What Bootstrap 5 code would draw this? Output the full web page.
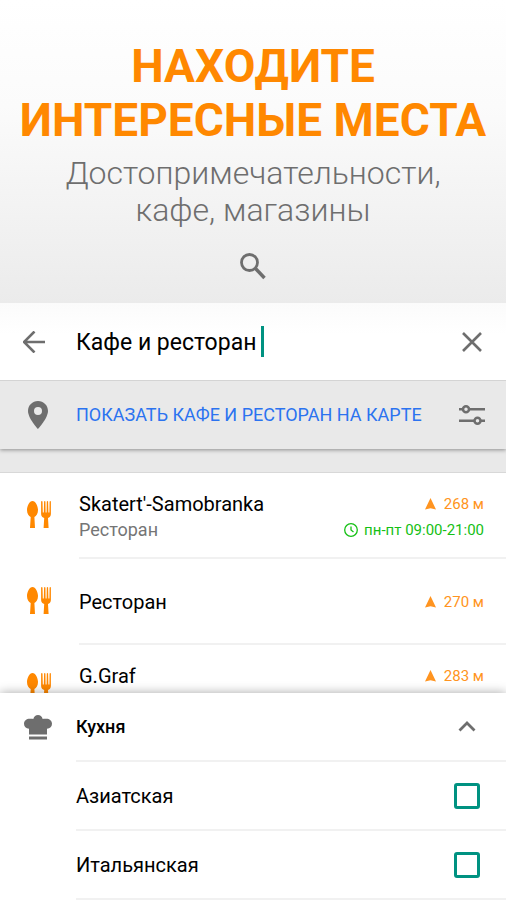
<!DOCTYPE html>
<html lang="ru">
<head>
<meta charset="utf-8">
<meta name="viewport" content="width=device-width, initial-scale=1">
<title>Находите интересные места</title>
<link href="https://cdn.jsdelivr.net/npm/bootstrap@5.3.0/dist/css/bootstrap.min.css" rel="stylesheet">
<style>
  :root { --accent: #ff8800; --ink: #6e6e6e; --teal: #009281; --line: #f1f1f1; --bar: #e9e9e9; }
  body { font-family: Roboto, "Liberation Sans", sans-serif; color: #000; background: #fff; overflow-x: hidden; }
  svg { display: block; flex: none; }
  .hero { background: linear-gradient(#fff 0, #fbfbfb 35%, #ebebeb 100%); padding: 39px 0 23px; color: var(--ink); }
  .hero-title { font-size: 46px; line-height: 54px; font-weight: 700; color: var(--accent); }
  .hero-sub { font-size: 32px; line-height: 37px; font-weight: 300; }
  .lead-cell { width: 76px; color: var(--ink); }
  .icon-btn { border: 0; background: none; padding: 0; color: var(--ink); }
  .icon-btn.back { margin-left: 23px; }
  .icon-btn.filters { margin-right: 21px; }
  .search-row { height: 78px; border-bottom: 1px solid #d4d4d4; background: linear-gradient(#fbfbfb, #fff 40%); }
  .search-input { width: 185px; border: 0; padding: 2px 0 0; background: none; font-size: 23px; line-height: 32px; color: #000; outline: 0; }
  .caret-bar { width: 3px; height: 31px; background: var(--teal); }
  .map-row { height: 68px; background: var(--bar); box-shadow: 0 1px 4px rgba(0,0,0,.4); clip-path: inset(0 0 -8px 0); position: relative; }
  .map-link { font-size: 18px; line-height: 24px; color: #2b73f0; text-decoration: none; }
  .spacer { height: 24px; background: var(--bar); border-bottom: 1px solid #d8d8d8; }
  .place { height: 86px; }
  .place-icon { width: 79px; padding: 28px 0 0 27px; color: var(--accent); }
  .place-body { border-bottom: 2px solid var(--line); padding: 18px 22px 0 0; }
  .single { padding-top: 30px; }
  .place-name { font-size: 20px; line-height: 26px; }
  .place-kind { font-size: 18px; line-height: 26px; color: #757575; }
  .meta { font-size: 15px; line-height: 26px; }
  .dist { color: #ff9420; }
  .hours { color: #15c015; }
  .sheet { margin-top: -38px; position: relative; background: #fff; box-shadow: 0 0 10px rgba(0,0,0,.35); }
  .sheet-body { height: 69px; border-bottom: 2px solid var(--line); padding-right: 26px; }
  .sheet-title { font-size: 18px; line-height: 24px; font-weight: 500; }
  .sheet-label { font-size: 20px; line-height: 26px; }
  .tick.form-check-input { width: 26px; height: 26px; margin: 0; border: 3px solid var(--teal); border-radius: 3px; background-color: #fff; }
</style>
</head>
<body>
<svg class="d-none" aria-hidden="true">
  <symbol id="cutlery" viewBox="0 0 24 27">
    <path fill="currentColor" d="M5.500 0C8.500 0 11 5 11 9c0 3.500-1.700 6-3.600 7L8 27H3l.7-11C1.700 15 0 12.500 0 9c0-4 2.500-9 5.500-9z"/>
    <path fill="currentColor" d="M14.100.5q.8-.8 1.400 0l.3 11h1l.3-11q.7-.8 1.300 0l.2 11h1l.2-11q.6-.8 1.300 0l.3 11h1l.2-11q.8-.8 1.300 0V13c0 2.400-1.500 3.300-2.900 4l.6 10h-5l.6-10c-1.600-.7-3.100-1.600-3.100-4z"/>
  </symbol>
  <symbol id="arrow" viewBox="0 0 11 12"><path fill="currentColor" d="M5.500 0L11 11.500l-5.500-1.300L0 11.500z"/></symbol>
</svg>

<header class="hero text-center">
  <h1 class="hero-title mb-0">НАХОДИТЕ<br>ИНТЕРЕСНЫЕ МЕСТА</h1>
  <p class="hero-sub mt-2 mb-0">Достопримечательности,<br>кафе, магазины</p>
  <svg class="mx-auto mt-4" width="26" height="27" viewBox="0 0 26 27" fill="none" stroke="currentColor" stroke-width="2.800"><circle cx="9.500" cy="9.500" r="8"/><path d="M15.500 15.500l9 9.500" stroke-width="3.400"/></svg>
</header>

<main>
  <form class="search-row d-flex align-items-center">
    <div class="lead-cell d-flex">
      <button type="button" class="icon-btn back" aria-label="Назад"><svg width="22" height="22" viewBox="1 1 22 22" fill="none" stroke="currentColor" stroke-width="2.600"><path d="M23 12H2M12.500 1.500L2 12l10.500 10.500"/></svg></button>
    </div>
    <input class="search-input" type="text" value="Кафе и ресторан" aria-label="Поиск">
    <span class="caret-bar"></span>
    <button type="button" class="icon-btn ms-auto me-4" aria-label="Очистить"><svg width="20" height="20" viewBox="0 0 20 20" fill="none" stroke="currentColor" stroke-width="2.600"><path d="M1 1l18 18M19 1L1 19"/></svg></button>
  </form>

  <div class="map-row d-flex align-items-center">
    <div class="lead-cell d-flex justify-content-center"><svg width="20" height="28" viewBox="0 0 20 28"><path fill="currentColor" fill-rule="evenodd" d="M10 0C4.400 0 0 4.400 0 10c0 7.300 10 18 10 18s10-10.700 10-18C20 4.400 15.600 0 10 0zm0 6a4 4 0 1 1 0 8 4 4 0 0 1 0-8z"/></svg></div>
    <a class="map-link" href="#">ПОКАЗАТЬ КАФЕ И РЕСТОРАН НА КАРТЕ</a>
    <button type="button" class="icon-btn filters ms-auto" aria-label="Фильтры"><svg width="26" height="20" viewBox="0 0 26 20" fill="none" stroke="currentColor" stroke-width="2.500"><path d="M0 4.300h4M10 4.300h16M0 15.700h15M21 15.700h5"/><circle cx="7" cy="4.300" r="3"/><circle cx="18.500" cy="15.700" r="3"/></svg></button>
  </div>
  <div class="spacer"></div>

  <ul class="list-unstyled mb-0">
    <li class="place d-flex">
      <div class="place-icon"><svg width="24" height="27"><use href="#cutlery"/></svg></div>
      <div class="place-body flex-grow-1 d-flex justify-content-between">
        <div><div class="place-name">Skatert'-Samobranka</div><div class="place-kind">Ресторан</div></div>
        <div class="meta">
          <div class="dist d-flex align-items-center justify-content-end gap-2"><svg width="11" height="12"><use href="#arrow"/></svg><span>268 м</span></div>
          <div class="hours d-flex align-items-center justify-content-end gap-1"><svg width="16" height="14" viewBox="0 0 16 14" fill="none" stroke="currentColor" stroke-width="1.300"><circle cx="7" cy="7" r="6.300"/><path d="M7 3.500V7l2.500 2"/></svg><span>пн-пт 09:00-21:00</span></div>
        </div>
      </div>
    </li>
    <li class="place d-flex">
      <div class="place-icon"><svg width="24" height="27"><use href="#cutlery"/></svg></div>
      <div class="place-body single flex-grow-1 d-flex justify-content-between">
        <div class="place-name">Ресторан</div>
        <div class="meta dist"><div class="d-flex align-items-center gap-2"><svg width="11" height="12"><use href="#arrow"/></svg><span>270 м</span></div></div>
      </div>
    </li>
    <li class="place d-flex">
      <div class="place-icon"><svg width="24" height="27"><use href="#cutlery"/></svg></div>
      <div class="place-body flex-grow-1 d-flex justify-content-between">
        <div class="place-name">G.Graf</div>
        <div class="meta dist"><div class="d-flex align-items-center gap-2"><svg width="11" height="12"><use href="#arrow"/></svg><span>283 м</span></div></div>
      </div>
    </li>
  </ul>

  <section class="sheet">
    <div class="d-flex align-items-center">
      <div class="lead-cell d-flex justify-content-center"><svg width="28" height="25" viewBox="0 0 28 25" fill="currentColor"><path d="M5 19v-5.300C2 13.500 0 11.500 0 8.800 0 5.500 3 3.400 6.500 3.800c1-.2 2 .1 2.800.2C10 1.500 11.800 0 14 0s4 1.500 4.700 4c.8-.1 1.800-.4 2.800-.2C25 3.400 28 5.500 28 8.800c0 2.700-2 4.700-5 4.900V19.500H5zM5 21.500h18v3H5z"/></svg></div>
      <div class="sheet-body flex-grow-1 d-flex align-items-center justify-content-between">
        <h2 class="sheet-title mb-0">Кухня</h2>
        <button type="button" class="icon-btn me-1" aria-label="Свернуть"><svg width="18" height="11" viewBox="0 0 18 11" fill="none" stroke="currentColor" stroke-width="2.800"><path d="M1.500 9.500L9 2l7.500 7.500"/></svg></button>
      </div>
    </div>
    <div class="d-flex">
      <div class="lead-cell"></div>
      <div class="sheet-body flex-grow-1 d-flex align-items-center justify-content-between">
        <label class="sheet-label" for="asian">Азиатская</label>
        <input class="tick form-check-input" type="checkbox" id="asian">
      </div>
    </div>
    <div class="d-flex">
      <div class="lead-cell"></div>
      <div class="sheet-body flex-grow-1 d-flex align-items-center justify-content-between">
        <label class="sheet-label" for="italian">Итальянская</label>
        <input class="tick form-check-input" type="checkbox" id="italian">
      </div>
    </div>
  </section>
</main>
<script src="https://cdn.jsdelivr.net/npm/bootstrap@5.3.0/dist/js/bootstrap.bundle.min.js"></script>
</body>
</html>
